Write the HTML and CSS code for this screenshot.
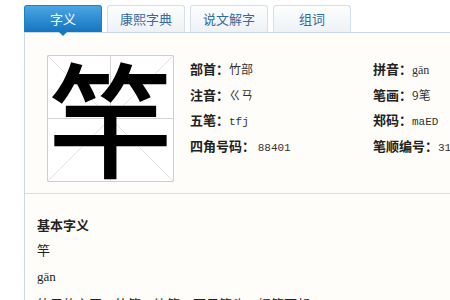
FILE: index.html
```html
<!DOCTYPE html>
<html lang="zh-CN">
<head>
    <meta charset="UTF-8">
    <title>竿 - 字义</title>
    <link rel="stylesheet" href="styles.css">
</head>
<body>
    <div class="page">
        <!-- 标签 -->
        <div class="tabs">
            <div class="tab active">字义</div>
            <div class="tab">康熙字典</div>
            <div class="tab">说文解字</div>
            <div class="tab">组词</div>
        </div>

        <div class="panel">
            <!-- 字头与基本信息 -->
            <div class="head">
                <div class="char-box">
                    <svg class="grid" width="127" height="127" viewBox="0 0 127 127">
                        <line x1="0" y1="0" x2="127" y2="127" stroke="#e3e3e3" stroke-width="1"/>
                        <line x1="127" y1="0" x2="0" y2="127" stroke="#e3e3e3" stroke-width="1"/>
                        <line x1="63.5" y1="0" x2="63.5" y2="127" stroke="#d4d4d4" stroke-width="1"/>
                        <line x1="0" y1="63.5" x2="127" y2="63.5" stroke="#d4d4d4" stroke-width="1"/>
                    </svg>
                    <span class="big-char">竿</span>
                </div>
                <div class="info">
                    <p><b>部首：</b>竹部</p>
                    <p><b>拼音：</b><span class="py">gān</span></p>
                    <p><b>注音：</b>ㄍㄢ</p>
                    <p><b>笔画：</b>9笔</p>
                    <p><b>五笔：</b><span class="mono">tfj</span></p>
                    <p><b>郑码：</b><span class="mono">maED</span></p>
                    <p><b>四角号码：</b> <span class="mono">88401</span></p>
                    <p><b>笔顺编号：</b><span class="mono">313112112</span></p>
                </div>
            </div>

            <!-- 基本字义 -->
            <div class="meaning">
                <h3>基本字义</h3>
                <p class="zi">竿</p>
                <p class="py">gān</p>
                <p class="txt">竹子的主干：竹竿。钓竿。百尺竿头。揭竿而起。</p>
            </div>
        </div>
    </div>
</body>
</html>
```

FILE: styles.css
```css
body {
    margin: 0;
    background-color: #fff;
    font-family: "Noto Sans CJK SC", "DejaVu Sans", sans-serif;
    color: #222;
}

.page {
    padding: 5px 0 0 24px;
    height: 295px;
    overflow: hidden;
}

.tabs {
    display: flex;
    gap: 5px;
    height: 27px;
}

.tab {
    position: relative;
    width: 78px;
    box-sizing: border-box;
    border: 1px solid #d3dfe9;
    border-bottom: none;
    border-radius: 3px 3px 0 0;
    background: linear-gradient(#fdfefe, #edf2f6);
    color: #336aa0;
    font-size: 13px;
    line-height: 26px;
    text-align: center;
}

.tab.active {
    border-color: #1c7fc8;
    background: linear-gradient(#4aa6e4, #1475c0);
    color: #fff;
}

.tab.active::after {
    content: "";
    position: absolute;
    left: 34px;
    bottom: -4px;
    border-left: 4px solid transparent;
    border-right: 4px solid transparent;
    border-top: 4px solid #1577c2;
}

.panel {
    border-left: 1px solid #c9d9e7;
    border-top: 1px solid #c9d9e7;
    background-color: #fffdf9;
}

.head {
    display: flex;
    padding: 22px 0 10px 22px;
    border-bottom: 1px solid #d3e0ea;
    height: 128px;
}

.char-box {
    position: relative;
    width: 127px;
    height: 127px;
    box-sizing: border-box;
    border: 1px solid #cfcfcf;
    background-color: #fff;
    flex-shrink: 0;
}

.grid {
    position: absolute;
    left: -1px;
    top: -1px;
}

.big-char {
    position: absolute;
    left: 0;
    top: -12px;
    width: 125px;
    text-align: center;
    font-size: 124px;
    line-height: 140px;
    font-weight: 500;
    color: #000;
}

.info {
    display: grid;
    grid-template-columns: 183px auto;
    grid-auto-rows: 25.6px;
    margin: 1px 0 0 16px;
    white-space: nowrap;
}

.info p {
    margin: 0;
    font-size: 12px;
    line-height: 25px;
    color: #333;
}

.info b {
    font-size: 13px;
    color: #222;
}

.mono {
    font-family: "Liberation Mono", "DejaVu Sans Mono", monospace;
    font-size: 11px;
}

.py {
    font-family: "Liberation Serif", "DejaVu Serif", serif;
    font-size: 12px;
}

.meaning {
    padding: 19px 0 0 12px;
}

.meaning h3 {
    margin: 0;
    font-size: 13px;
    line-height: 24px;
    font-weight: 700;
}

.meaning p {
    margin: 0;
    font-size: 13px;
    line-height: 26px;
}

.meaning p.py {
    font-size: 13px;
    line-height: 28px;
}

.meaning .txt {
    white-space: nowrap;
}
```
